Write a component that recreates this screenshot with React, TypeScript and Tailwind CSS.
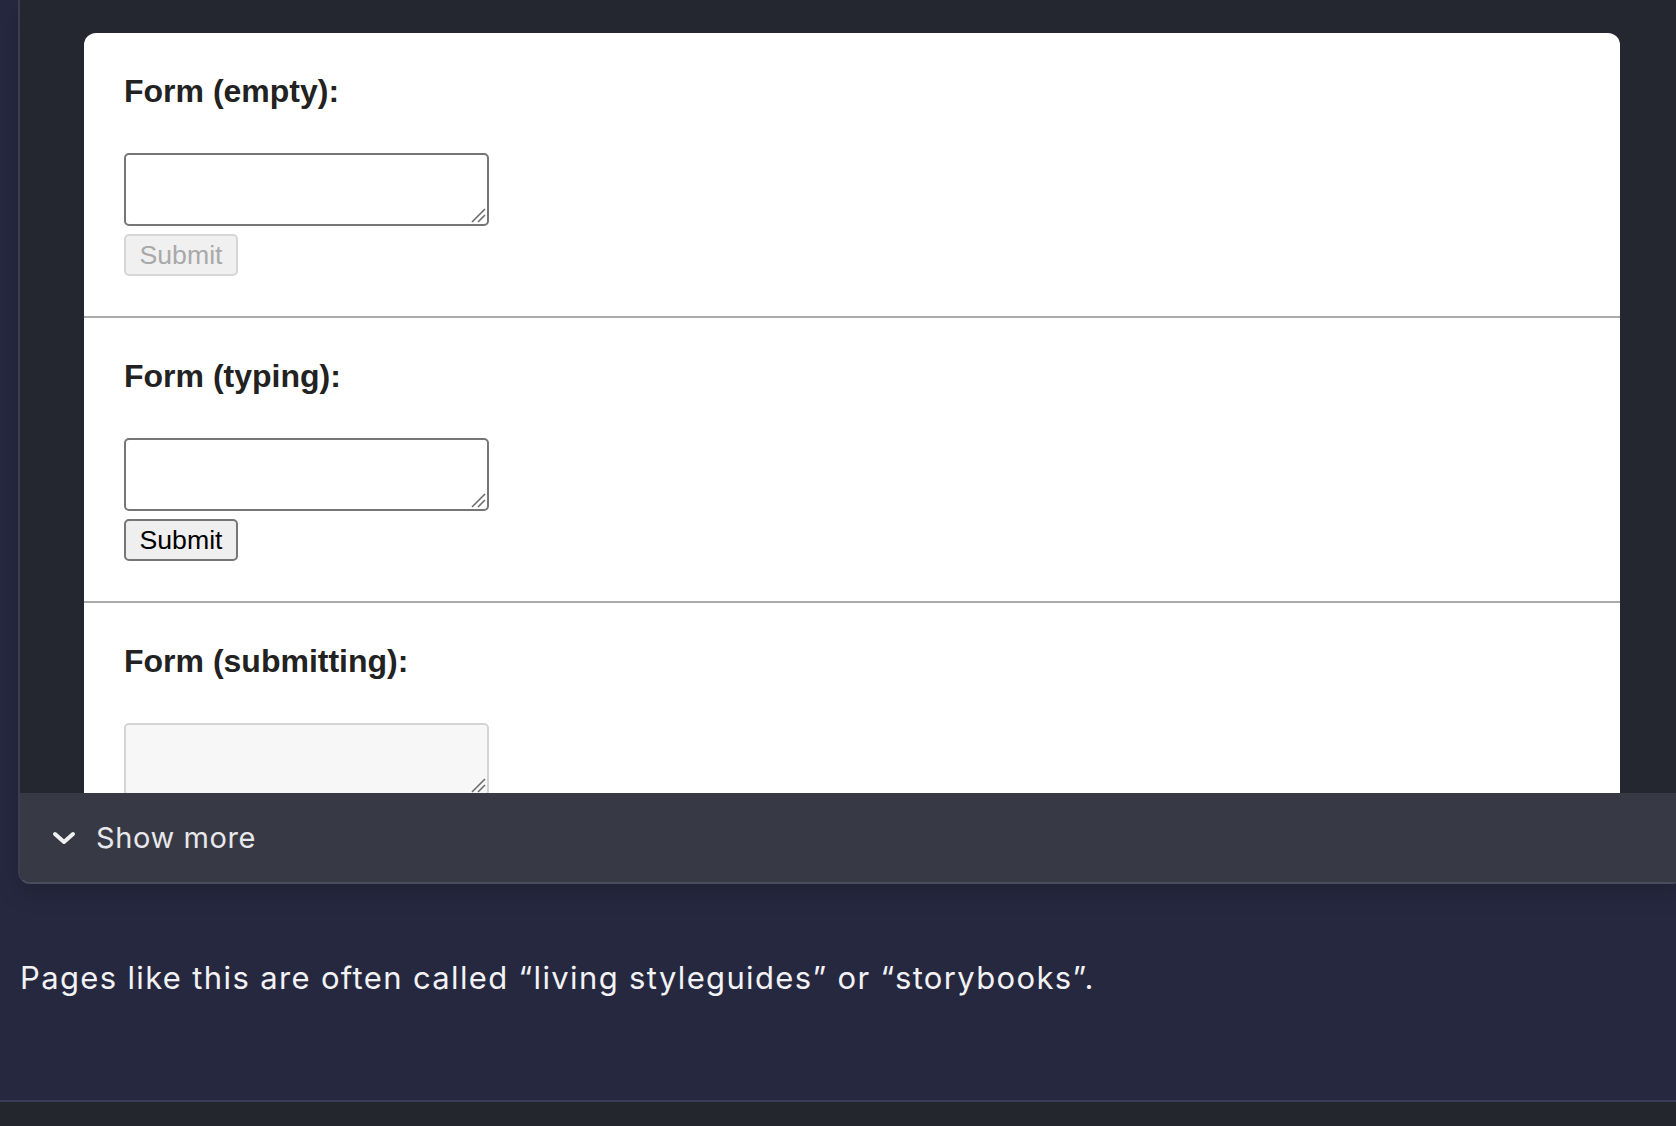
import { ReactNode } from "react";

const arial = { fontFamily: '"Liberation Sans", Arial, sans-serif' };
const sans = { fontFamily: 'Inter, "Noto Sans", sans-serif' };

// little diagonal grip drawn in the corner of each textarea
function ResizeGrip({ color = "#6b6b6b" }: { color?: string }) {
  return (
    <svg
      className="pointer-events-none absolute right-[3px] bottom-[3px]"
      width="15"
      height="15"
      viewBox="0 0 15 15"
    >
      <path d="M14 1 L1 14" stroke={color} strokeWidth="1.6" />
      <path d="M14 7 L7 14" stroke={color} strokeWidth="1.6" />
    </svg>
  );
}

function FakeTextarea({ disabled }: { disabled?: boolean }) {
  return (
    <div className="relative mt-[43px] h-[73px] w-[365px]">
      <textarea
        disabled={disabled}
        className={
          disabled
            ? "block h-full w-full resize-none rounded-[5px] border-2 border-[#d4d4d4] bg-[#f7f7f7] outline-none"
            : "block h-full w-full resize-none rounded-[5px] border-2 border-[#767676] bg-white outline-none"
        }
      />
      <ResizeGrip />
    </div>
  );
}

function SubmitButton({ disabled }: { disabled?: boolean }) {
  return (
    <button
      disabled={disabled}
      style={arial}
      className={
        disabled
          ? "mt-2 flex h-[42px] w-[114px] items-center justify-center rounded-[5px] border-2 border-[#d6d6d6] bg-[#f0f0f0] text-[26.67px] text-[#a9a9a9]"
          : "mt-2 flex h-[42px] w-[114px] items-center justify-center rounded-[5px] border-2 border-[#767676] bg-[#efefef] text-[26.67px] text-black"
      }
    >
      Submit
    </button>
  );
}

function Section({ title, children, divider }: { title: string; children: ReactNode; divider?: boolean }) {
  return (
    <section className={divider ? "border-t-2 border-[#ababab] px-10 py-10" : "px-10 py-10"}>
      <h4 style={arial} className="text-[32px] leading-[37px] font-bold text-[#222222]">
        {title}
      </h4>
      {children}
    </section>
  );
}

export default function App() {
  return (
    <div className="flex h-[1126px] w-full flex-col overflow-hidden bg-[#262840]">
      <div className="ml-[18px] w-[1666px] shrink-0 overflow-hidden rounded-b-[12px] border-b-2 border-l-2 border-[#3b3e4f] border-b-[#4a4d5d] bg-[#24272f] shadow-[0_8px_24px_rgba(0,0,0,0.18)]">
        <div className="h-[793px] overflow-hidden pt-[33px] pl-[64px]">
          <div className="w-[1536px] rounded-t-[12px] bg-white">
            <Section title="Form (empty):">
              <FakeTextarea />
              <SubmitButton disabled />
            </Section>
            <Section title="Form (typing):" divider>
              <FakeTextarea />
              <SubmitButton />
            </Section>
            <Section title="Form (submitting):" divider>
              <FakeTextarea disabled />
            </Section>
          </div>
        </div>
        <button
          style={sans}
          className="flex h-[89px] w-full items-center gap-[20px] bg-[#373a45] pl-[32px] text-left text-[29px] tracking-[0.6px] text-[#e8e8ec]"
        >
          <svg width="24" height="14" viewBox="0 0 24 14" fill="none">
            <polyline
              points="3,3 12,11 21,3"
              stroke="#f0f0f2"
              strokeWidth="4"
              strokeLinecap="round"
              strokeLinejoin="round"
            />
          </svg>
          <span>Show more</span>
        </button>
      </div>

      <p style={sans} className="mt-[71px] pl-[20px] text-[31px] leading-[46px] tracking-[1.35px] text-[#f2f2f4]">
        Pages like this are often called “living styleguides” or “storybooks”.
      </p>

      <div className="mt-auto h-[26px] border-t-2 border-[#3a3b55] bg-[#24262d]" />
    </div>
  );
}
